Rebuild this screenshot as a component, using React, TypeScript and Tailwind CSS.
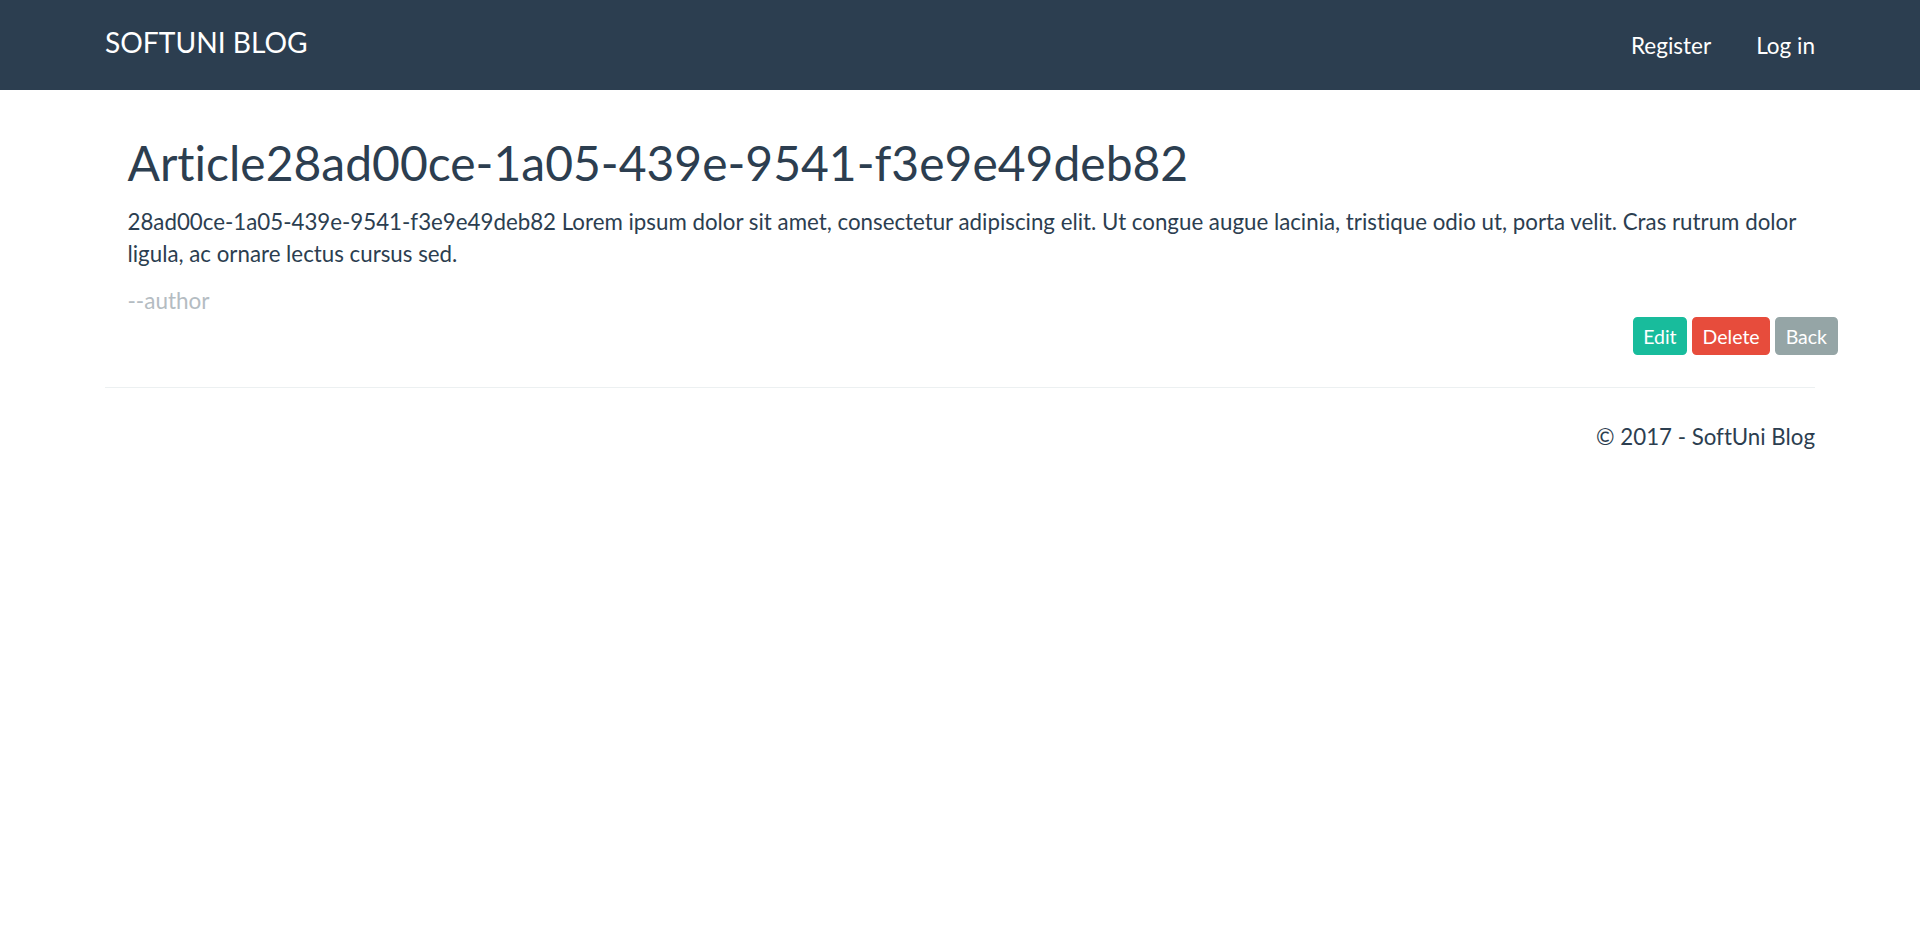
export default function App() {
  return (
    <div className="min-h-[937px] bg-white text-[#2c3e50] [font-variant-ligatures:none]" style={{ fontFamily: 'Lato, "Open Sans", sans-serif' }}>
      <nav className="h-[90px] bg-[#2c3e50]">
        <div className="mx-auto flex w-[1755px] items-start justify-between px-[22.5px]">
          <a className="mt-[26px] text-[28.2px] leading-[1.2] text-white">SOFTUNI BLOG</a>
          <div className="mt-[32px] flex gap-[45px] text-[22.5px] leading-[1.2] text-white">
            <a>Register</a>
            <a>Log in</a>
          </div>
        </div>
      </nav>
      <div className="mx-auto w-[1755px] px-[22.5px]">
        <div className="ml-[22.5px] mr-[-22.5px]">
          <h2 className="mt-[47px] text-[48px] leading-[1.1]">Article28ad00ce-1a05-439e-9541-f3e9e49deb82</h2>
          <p className="mt-[16px] text-[22.3px] leading-[32.14px]">
            28ad00ce-1a05-439e-9541-f3e9e49deb82 Lorem ipsum dolor sit amet, consectetur adipiscing elit. Ut congue augue lacinia, tristique odio ut, porta velit. Cras rutrum dolor ligula, ac ornare lectus cursus sed.
          </p>
          <p className="mt-[15px] text-[22.5px] leading-[32.14px] text-[#b4bcc2]">--author</p>
          <div className="flex justify-end gap-[5px] text-[19.5px] leading-[1.5] text-white">
            <a className="rounded-[4.5px] border-[3px] border-[#18bc9c] bg-[#18bc9c] px-[7.5px] py-[1.5px]">Edit</a>
            <a className="rounded-[4.5px] border-[3px] border-[#e74c3c] bg-[#e74c3c] px-[7.5px] py-[1.5px]">Delete</a>
            <a className="rounded-[4.5px] border-[3px] border-[#95a5a6] bg-[#95a5a6] px-[7.5px] py-[1.5px]">Back</a>
          </div>
        </div>
        <hr className="mt-[32px] border-t-[1.5px] border-[#ecf0f1]" />
        <p className="mt-[33px] text-right text-[22.3px] leading-[32.14px]">© 2017 - SoftUni Blog</p>
      </div>
    </div>
  );
}
